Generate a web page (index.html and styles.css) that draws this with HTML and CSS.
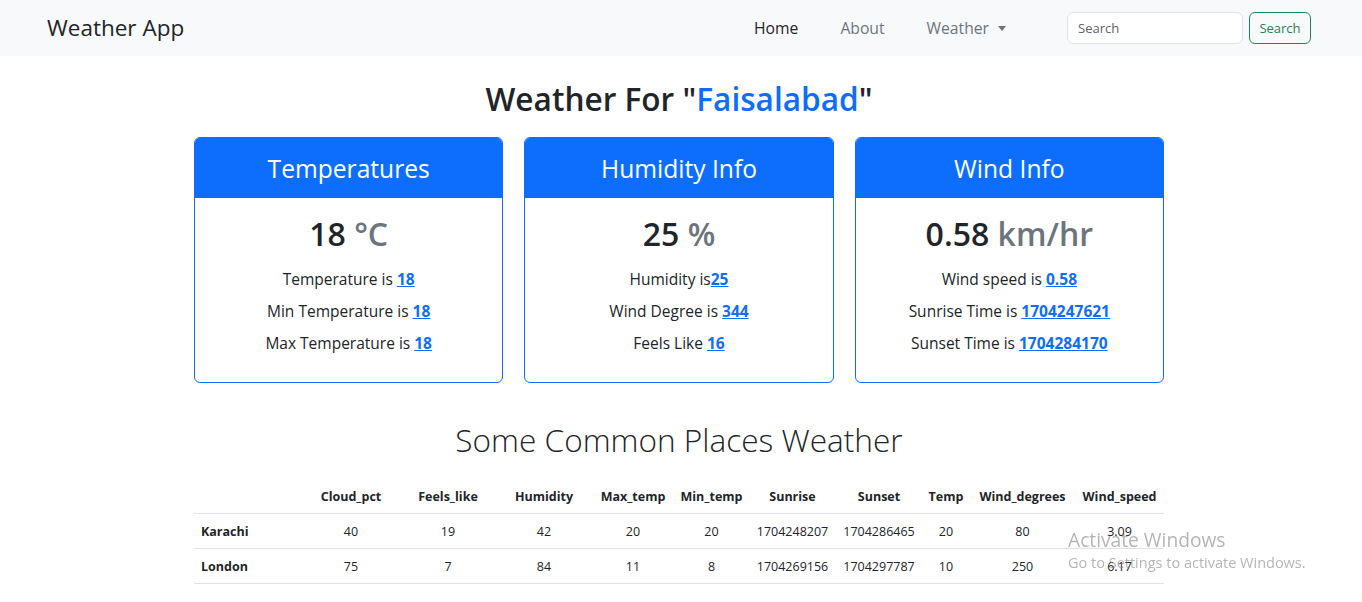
FILE: index.html
```html
<!DOCTYPE html>
<html lang="en">
<head>
<meta charset="utf-8">
<title>Weather App</title>
<link rel="stylesheet" href="styles.css">
</head>
<body>
<nav class="navbar">
  <a class="brand" href="#">Weather App</a>
  <ul class="nav">
    <li><a class="nav-link active" href="#">Home</a></li>
    <li><a class="nav-link" href="#">About</a></li>
    <li><a class="nav-link dropdown" href="#">Weather <span class="caret"></span></a></li>
  </ul>
  <form class="search">
    <input class="search-input" type="search" placeholder="Search">
    <button class="search-btn" type="button">Search</button>
  </form>
</nav>

<main class="container">
  <h1 class="title">Weather For "<span class="city">Faisalabad</span>"</h1>

  <div class="cards">
    <div class="card">
      <div class="card-header">Temperatures</div>
      <div class="card-body">
        <div class="value">18 <span class="unit">°C</span></div>
        <p class="line">Temperature is <a href="#">18</a></p>
        <p class="line">Min Temperature is <a href="#">18</a></p>
        <p class="line">Max Temperature is <a href="#">18</a></p>
      </div>
    </div>
    <div class="card">
      <div class="card-header">Humidity Info</div>
      <div class="card-body">
        <div class="value">25 <span class="unit">%</span></div>
        <p class="line">Humidity is<a href="#">25</a></p>
        <p class="line">Wind Degree is <a href="#">344</a></p>
        <p class="line">Feels Like <a href="#">16</a></p>
      </div>
    </div>
    <div class="card">
      <div class="card-header">Wind Info</div>
      <div class="card-body">
        <div class="value">0.58 <span class="unit">km/hr</span></div>
        <p class="line">Wind speed is <a href="#">0.58</a></p>
        <p class="line">Sunrise Time is <a href="#">1704247621</a></p>
        <p class="line">Sunset Time is <a href="#">1704284170</a></p>
      </div>
    </div>
  </div>

  <h2 class="subtitle">Some Common Places Weather</h2>

  <table class="table">
    <colgroup>
      <col class="c0"><col class="c1"><col class="c2"><col class="c3"><col class="c4"><col class="c5">
      <col class="c6"><col class="c7"><col class="c8"><col class="c9"><col class="c10">
    </colgroup>
    <thead>
      <tr>
        <th></th>
        <th>Cloud_pct</th>
        <th>Feels_like</th>
        <th>Humidity</th>
        <th>Max_temp</th>
        <th>Min_temp</th>
        <th>Sunrise</th>
        <th>Sunset</th>
        <th>Temp</th>
        <th>Wind_degrees</th>
        <th>Wind_speed</th>
      </tr>
    </thead>
    <tbody>
      <tr>
        <th class="place">Karachi</th>
        <td>40</td><td>19</td><td>42</td><td>20</td><td>20</td><td>1704248207</td><td>1704286465</td><td>20</td><td>80</td><td>3.09</td>
      </tr>
      <tr>
        <th class="place">London</th>
        <td>75</td><td>7</td><td>84</td><td>11</td><td>8</td><td>1704269156</td><td>1704297787</td><td>10</td><td>250</td><td>6.17</td>
      </tr>
    </tbody>
  </table>
</main>

<div class="watermark">
  <div class="wm-title">Activate Windows</div>
  <div class="wm-sub">Go to Settings to activate Windows.</div>
</div>
</body>
</html>
```

FILE: styles.css
```css
* { box-sizing: border-box; }

html, body {
  margin: 0;
  padding: 0;
}

body {
  font-family: "Open Sans", "Noto Sans", "Liberation Sans", sans-serif;
  color: #212529;
  background: #fff;
  overflow: hidden;
}

a { color: #0d6efd; }

/* Navbar */
.navbar {
  height: 56px;
  background: #f8f9fa;
  display: flex;
  align-items: center;
  padding: 0 51px 0 47px;
}

.brand {
  font-size: 22.5px;
  color: #212529;
  text-decoration: none;
  margin-right: auto;
  line-height: 30px;
}

.nav {
  list-style: none;
  margin: 0;
  padding: 0;
  display: flex;
  align-items: center;
  gap: 42px;
  margin-right: 61px;
}

.nav-link {
  font-size: 15.7px;
  color: #6c757d;
  text-decoration: none;
  display: flex;
  align-items: center;
}

.nav-link.active { color: #212529; }

.caret {
  display: inline-block;
  width: 0;
  height: 0;
  margin-left: 9px;
  border-left: 4.5px solid transparent;
  border-right: 4.5px solid transparent;
  border-top: 5px solid #6c757d;
}

.search {
  display: flex;
  gap: 6px;
}

.search-input {
  width: 176px;
  height: 32px;
  border: 1px solid #dee2e6;
  border-radius: 6px;
  padding: 0 10px;
  font-family: inherit;
  font-size: 13px;
  color: #212529;
  background: #fff;
}

.search-input::placeholder { color: #5c636a; }

.search-btn {
  width: 62px;
  height: 32px;
  border: 1px solid #198754;
  border-radius: 6px;
  background: transparent;
  color: #198754;
  font-family: inherit;
  font-size: 13px;
  padding: 0;
}

/* Main */
.container {
  width: 970px;
  margin-left: calc(50% - 487px);
}

.title {
  margin: 22px 0 0;
  text-align: center;
  font-size: 31.6px;
  font-weight: 600;
  line-height: 42px;
}

.city { color: #0d6efd; }

.cards {
  display: flex;
  gap: 21px;
  margin-top: 17px;
}

.card {
  flex: 1;
  border: 1px solid #0d6efd;
  border-radius: 6px;
  overflow: hidden;
  background: #fff;
}

.card-header {
  background: #0d6efd;
  color: #fff;
  text-align: center;
  font-size: 24.6px;
  height: 60px;
  line-height: 62px;
}

.card-body {
  text-align: center;
  padding: 16px 16px 23px;
}

.value {
  font-size: 32px;
  font-weight: 600;
  line-height: 40px;
  margin-bottom: 9px;
}

.unit { color: #6c757d; }

.line {
  margin: 0;
  font-size: 15.5px;
  line-height: 32px;
}

.line a {
  font-weight: 700;
  text-decoration: underline;
}

.subtitle {
  margin: 36px 0 0;
  text-align: center;
  font-size: 31.6px;
  font-weight: 300;
  line-height: 42px;
}

/* Table */
.table {
  width: 970px;
  margin-top: 19px;
  border-collapse: collapse;
  table-layout: fixed;
  font-size: 12.5px;
}

.c0 { width: 108px; }
.c1 { width: 98px; }
.c2 { width: 96px; }
.c3 { width: 96px; }
.c4 { width: 82px; }
.c5 { width: 75px; }
.c6 { width: 87px; }
.c7 { width: 86px; }
.c8 { width: 48px; }
.c9 { width: 105px; }
.c10 { width: 89px; }

.table th,
.table td {
  padding: 8px 0;
  line-height: 17px;
  text-align: center;
  white-space: nowrap;
  border-bottom: 1px solid #dee2e6;
}

.table tbody th,
.table tbody td {
  padding: 8.5px 0;
}

.table th { font-weight: 700; }

.table .place {
  text-align: left;
  padding-left: 7px;
}

/* Windows watermark */
.watermark {
  position: fixed;
  left: 1068px;
  top: 527px;
  color: rgba(120, 120, 120, 0.55);
  pointer-events: none;
}

.wm-title {
  font-size: 19.2px;
  line-height: 25px;
}

.wm-sub {
  font-size: 14.5px;
  line-height: 22px;
}
```
